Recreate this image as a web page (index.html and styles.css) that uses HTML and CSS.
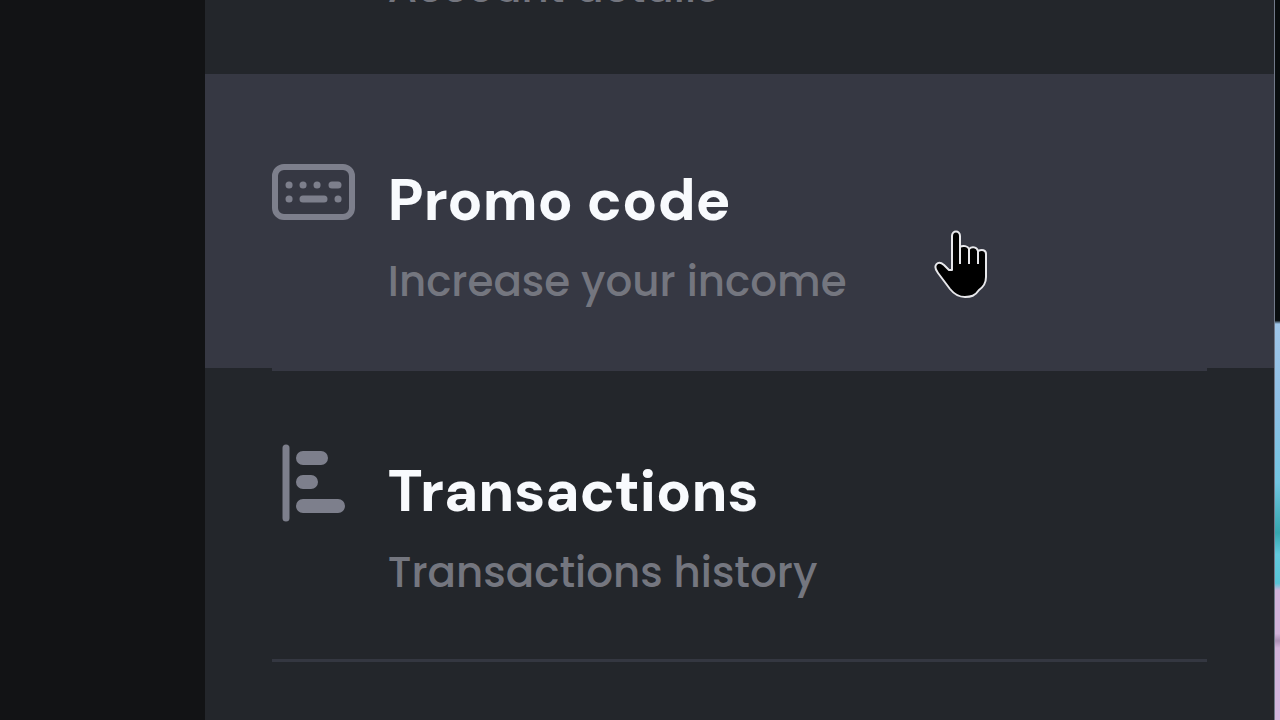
FILE: index.html
```html
<!DOCTYPE html>
<html lang="en">
<head>
<meta charset="utf-8">
<meta name="viewport" content="width=device-width, initial-scale=1">
<title>Account menu</title>
<link rel="stylesheet" href="styles.css">
</head>
<body>
<div class="screen">
  <nav class="menu" aria-label="Account">
    <a class="item item-scrolled" href="#account"><span class="subtitle">Account details</span></a>
    <a class="item item-active" href="#promo">
      <svg class="icon" viewBox="0 -13 84 84" aria-hidden="true">
        <rect x="3" y="4" width="77" height="50" rx="9" fill="none" stroke="currentColor" stroke-width="6"/>
        <g stroke="currentColor" stroke-width="7" stroke-linecap="round">
          <path d="M17 22h.1M31 22h.1M45 22h.1M60 22h6M17 36h.1M31 36h21M66 36h.1"/>
        </g>
      </svg>
      <span class="text"><span class="title">Promo code</span><span class="subtitle">Increase your income</span></span>
    </a>
    <hr class="divider divider-active">
    <a class="item" href="#transactions">
      <svg class="icon" viewBox="0 -3 84 84" aria-hidden="true">
        <g stroke="currentColor" stroke-linecap="round">
          <path stroke-width="7" d="M14 4v70"/>
          <path stroke-width="14" d="M31 14h18M31 38h8M31 62h35"/>
        </g>
      </svg>
      <span class="text"><span class="title">Transactions</span><span class="subtitle">Transactions history</span></span>
    </a>
    <hr class="divider">
  </nav>
  <div class="backdrop"></div>
  <svg class="pointer" viewBox="0 0 54 68" aria-hidden="true">
    <path d="M18 6c0-6 8-6 8 0v11c3-2 8-1 9 2 3-3 8-2 9 2 4-2 8-1 8 3v23c0 7-3 10-7 13-4 6-8 7-14 7-7 0-11-3-15-8L4 43c-6-8 0-13 6-8l5 5h3z" fill="#000" stroke="#e8e8ec" stroke-width="2" stroke-linejoin="round"/>
    <path d="M26 17v17M35 19v15M44 21v13" stroke="#e8e8ec" stroke-width="2"/>
  </svg>
</div>
</body>
</html>
```
FILE: styles.css
```css
* { box-sizing: border-box; }
body {
  margin: 0;
  background: #121315;
  font-family: "DM Sans", Inter, sans-serif;
}
.screen {
  position: relative;
  display: grid;
  grid-template-columns: 16% 1fr 6px;
  height: 100vh;
  overflow: hidden;
}
.menu {
  grid-column: 2;
  background: #23262b;
}
.item {
  display: flex;
  align-items: flex-start;
  gap: 32px;
  padding: 70px 67px 62px;
  text-decoration: none;
  color: #7d7f8c;
}
.item-scrolled {
  margin-top: -36px;
  padding: 0 67px 62px 183px;
}
.item-active {
  padding-top: 76px;
  background: #363843;
}
.icon {
  flex: none;
  width: 84px;
  height: 84px;
}
.text {
  display: flex;
  flex-direction: column;
  gap: 20px;
  padding-top: 12px;
}
.title {
  color: #f8fafd;
  font-size: 58px;
  font-weight: 800;
  line-height: 76px;
}
.subtitle {
  color: #74767f;
  font-family: Poppins, "DM Sans", Inter, sans-serif;
  font-size: 42px;
  font-weight: 500;
  line-height: 48px;
}
.divider {
  height: 3px;
  margin: 0 67px;
  border: 0;
  background: #343741;
}
.divider-active { background: #363843; }
.backdrop {
  border-left: 1px solid #717989;
  background: linear-gradient(#090d0f 0 44.5%, #9fc5e8 45%, #8dbfe5 57%, #71c5e2 67%, #35a6ae 74%, #62c8dd 77%, #57c4d7 81%, #d3b3da 82%, #d3b3da 88%, #ad91b7 89%, #d3b3da 90%, #d3b5dd);
}
.pointer {
  position: absolute;
  left: 73%;
  top: 32%;
  width: 54px;
  height: 68px;
}
```
